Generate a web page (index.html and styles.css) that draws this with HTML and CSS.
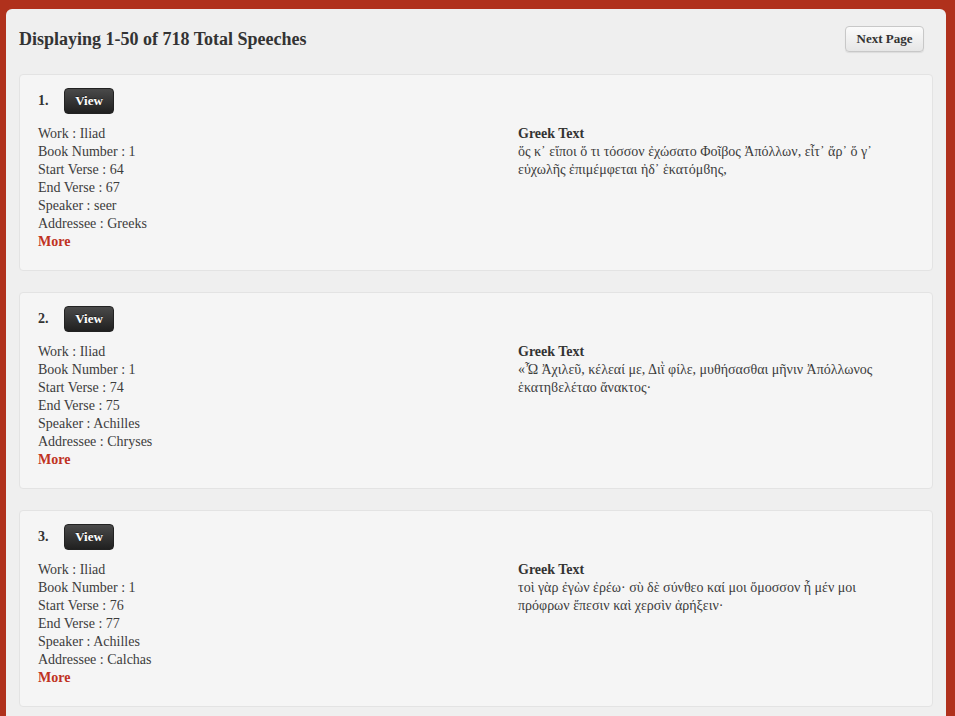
FILE: index.html
```html
<!DOCTYPE html>
<html>
<head>
<meta charset="utf-8">
<link rel="stylesheet" href="styles.css">
</head>
<body>
<div class="panel">
  <div class="header">
    <h1 class="title">Displaying 1-50 of 718 Total Speeches</h1>
    <button class="next-btn">Next Page</button>
  </div>

  <div class="card">
    <div class="card-top"><span class="num">1.</span><button class="view-btn">View</button></div>
    <div class="card-body">
      <div class="meta">
        <div>Work : Iliad</div>
        <div>Book Number : 1</div>
        <div>Start Verse : 64</div>
        <div>End Verse : 67</div>
        <div>Speaker : seer</div>
        <div>Addressee : Greeks</div>
        <a class="more" href="#">More</a>
      </div>
      <div class="greek">
        <div class="greek-label">Greek Text</div>
        <div>ὅς κ᾽ εἴποι ὅ τι τόσσον ἐχώσατο Φοῖβος Ἀπόλλων, εἶτ᾽ ἄρ᾽ ὅ γ᾽ εὐχωλῆς ἐπιμέμφεται ἠδ᾽ ἑκατόμϐης,</div>
      </div>
    </div>
  </div>

  <div class="card">
    <div class="card-top"><span class="num">2.</span><button class="view-btn">View</button></div>
    <div class="card-body">
      <div class="meta">
        <div>Work : Iliad</div>
        <div>Book Number : 1</div>
        <div>Start Verse : 74</div>
        <div>End Verse : 75</div>
        <div>Speaker : Achilles</div>
        <div>Addressee : Chryses</div>
        <a class="more" href="#">More</a>
      </div>
      <div class="greek">
        <div class="greek-label">Greek Text</div>
        <div>«Ὦ Ἀχιλεῦ, κέλεαί με, Διῒ φίλε, μυθήσασθαι μῆνιν Ἀπόλλωνος ἑκατηϐελέταο ἄνακτος·</div>
      </div>
    </div>
  </div>

  <div class="card">
    <div class="card-top"><span class="num">3.</span><button class="view-btn">View</button></div>
    <div class="card-body">
      <div class="meta">
        <div>Work : Iliad</div>
        <div>Book Number : 1</div>
        <div>Start Verse : 76</div>
        <div>End Verse : 77</div>
        <div>Speaker : Achilles</div>
        <div>Addressee : Calchas</div>
        <a class="more" href="#">More</a>
      </div>
      <div class="greek">
        <div class="greek-label">Greek Text</div>
        <div>τοὶ γὰρ ἐγὼν ἐρέω· σὺ δὲ σύνθεο καί μοι ὄμοσσον ἦ μέν μοι πρόφρων ἔπεσιν καὶ χερσὶν ἀρήξειν·</div>
      </div>
    </div>
  </div>
</div>
</body>
</html>
```

FILE: styles.css
```css
html, body {
  margin: 0;
  padding: 0;
}
body {
  background: #b0311c;
  font-family: "Liberation Serif", "Times New Roman", serif;
  font-size: 14px;
  line-height: 18px;
  color: #3c3c3c;
  padding: 9px 9px 0 6px;
  height: 716px;
  overflow: hidden;
  box-sizing: border-box;
}
.panel {
  background: #efefef;
  border-radius: 6px 6px 0 0;
  padding: 0 13px 20px 13px;
  min-height: 720px;
}
.header {
  display: flex;
  justify-content: space-between;
  align-items: center;
  padding: 17px 9px 0 0;
  height: 26px;
}
.title {
  margin: 0;
  font-size: 18px;
  font-weight: bold;
  color: #333;
  line-height: 26px;
}
.next-btn {
  font-family: "Liberation Serif", "Times New Roman", serif;
  font-weight: bold;
  font-size: 13px;
  color: #333;
  height: 26px;
  width: 79px;
  padding: 0;
  border: 1px solid #c8c8c8;
  border-radius: 4px;
  background: linear-gradient(#fbfbfb, #e6e6e6);
  box-shadow: 0 1px 1px rgba(0,0,0,0.08);
}
.card {
  background: #f5f5f5;
  border: 1px solid #e3e3e3;
  border-radius: 4px;
  margin-top: 22px;
  padding: 13px 19px 19px 18px;
  height: 163px;
}
.card + .card {
  margin-top: 21px;
}
.card-top {
  display: flex;
  align-items: center;
  height: 26px;
}
.num {
  font-weight: bold;
  color: #333;
  width: 26px;
}
.view-btn {
  font-family: "Liberation Serif", "Times New Roman", serif;
  font-weight: bold;
  font-size: 13px;
  color: #fff;
  width: 50px;
  height: 26px;
  padding: 0;
  border: 1px solid #222;
  border-radius: 4px;
  background: linear-gradient(#4a4a4a, #202020);
  text-shadow: 0 -1px 0 rgba(0,0,0,0.4);
}
.card-body {
  display: grid;
  grid-template-columns: 480px 1fr;
  margin-top: 11px;
}
.greek {
  max-width: 380px;
}
.more {
  display: block;
  color: #c0321f;
  font-weight: bold;
  text-decoration: none;
}
.greek-label {
  font-weight: bold;
  color: #333;
}
```
